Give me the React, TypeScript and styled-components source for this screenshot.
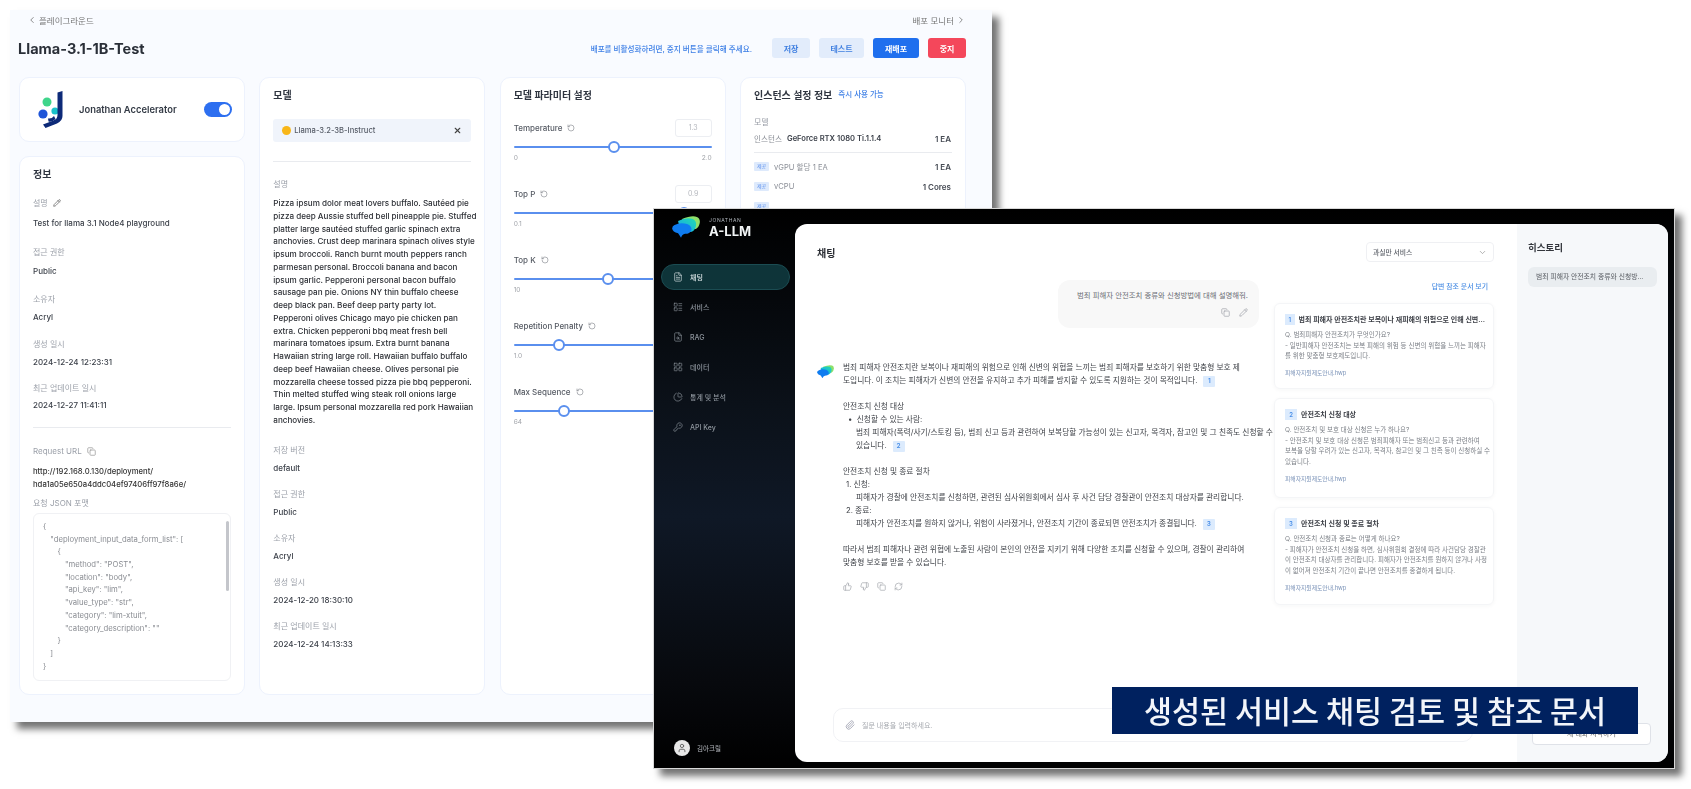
import React from "react";
import styled, { createGlobalStyle } from "styled-components";
import {
  ChevronLeft, ChevronRight, ChevronDown, Pencil, Copy, RotateCcw, X, FileText, LayoutList, FileSearch,
  LayoutGrid, PieChart, KeyRound, ThumbsUp, ThumbsDown, RefreshCw, Paperclip, User,
} from "lucide-react";

const Global = createGlobalStyle`
  html, body { margin: 0; padding: 0; background: #fff; }
  * { box-sizing: border-box; }
  body { font-family: Inter, "Noto Sans CJK KR", "Noto Sans", sans-serif; }
`;

const Stage = styled.div`
  position: relative;
  width: 1691px;
  height: 789px;
  overflow: hidden;
  background: #fff;
`;

/* ---------- back window: playground detail ---------- */
const PlaygroundWindow = styled.section`
  position: absolute;
  left: 10px;
  top: 10px;
  width: 982px;
  height: 712px;
  padding: 4px 26px 0 9px;
  background: #f9fbff;
  box-shadow: 7px 7px 7px rgba(0, 0, 0, 0.55);
  filter: blur(0.75px);
  display: flex;
  flex-direction: column;
`;
const CrumbRow = styled.div`
  display: flex;
  justify-content: space-between;
  align-items: center;
  height: 12px;
  font-size: 8.5px;
  color: #777;
  padding: 0 0 0 8px;
`;
const Crumb = styled.span`
  display: inline-flex;
  align-items: center;
  gap: 2px;
`;
const TitleRow = styled.div`
  display: flex;
  align-items: center;
  height: 20px;
  margin-top: 12px;
  margin-left: -1px;
`;
const PageTitle = styled.h1`
  margin: 0;
  font-size: 14.5px;
  font-weight: 700;
  color: #2a2f38;
  flex: 1;
`;
const Hint = styled.span`
  font-size: 7.6px;
  font-weight: 500;
  color: #3d7fe6;
  margin-right: 11px;
`;
const Button = styled.button<{ $kind: "soft" | "primary" | "danger"; $w: number }>`
  width: ${(p) => p.$w}px;
  height: 20px;
  margin-left: 9px;
  border: 0;
  border-radius: 3px;
  font: 600 8px Inter, "Noto Sans CJK KR", sans-serif;
  color: ${(p) => (p.$kind === "soft" ? "#3f7fe0" : "#fff")};
  background: ${(p) => (p.$kind === "soft" ? "#e2ecfb" : p.$kind === "primary" ? "#1f6fee" : "#f4475b")};
  padding: 0;
`;
const CardGrid = styled.div`
  display: grid;
  grid-template-columns: repeat(4, 226px);
  column-gap: 14.33px;
  height: 618px;
  margin-top: 19px;
`;
const Column = styled.div`
  display: flex;
  flex-direction: column;
  gap: 14px;
  min-height: 0;
`;
const Card = styled.div<{ $grow?: boolean }>`
  background: #fff;
  border: 1.5px solid #edf2fd;
  border-radius: 10px;
  padding: 9.5px 13px 13px;
  ${(p) => (p.$grow ? "flex: 1;" : "")}
  min-height: 0;
  overflow: hidden;
`;
const ToggleCard = styled(Card)`
  height: 65px;
  display: flex;
  align-items: center;
  padding: 0 12px 0 17px;
`;
const AccelName = styled.span`
  flex: 1;
  margin-left: 16px;
  font-size: 9.4px;
  font-weight: 600;
  color: #333a45;
`;
const Toggle = styled.span`
  position: relative;
  display: block;
  width: 28px;
  height: 15px;
  border-radius: 8px;
  background: #2d6ff0;
  &::after {
    content: "";
    position: absolute;
    right: 2px;
    top: 2px;
    width: 11px;
    height: 11px;
    border-radius: 50%;
    background: #fff;
  }
`;
const CardTitle = styled.h2<{ $after?: number }>`
  margin: 0 0 ${(p) => p.$after ?? 16}px;
  font-size: 10px;
  line-height: 14px;
  font-weight: 700;
  color: #2f3540;
  display: flex;
  align-items: center;
  gap: 6px;
`;
const TitleLink = styled.span`
  font-size: 7.5px;
  font-weight: 500;
  color: #3d7fe6;
`;
const Field = styled.div<{ $gap?: number; $after?: number }>`
  display: flex;
  flex-direction: column;
  gap: ${(p) => p.$gap ?? 6}px;
  margin-bottom: ${(p) => p.$after ?? 14}px;
`;
const Label = styled.div`
  display: flex;
  align-items: center;
  gap: 5px;
  font-size: 8px;
  line-height: 12px;
  color: #9a9fa8;
  height: 12px;
`;
const Value = styled.div`
  font-size: 8px;
  line-height: 12px;
  height: 12px;
  font-weight: 500;
  color: #3a3f48;
  white-space: nowrap;
`;
const Rule = styled.hr<{ $top: number; $bottom: number }>`
  border: 0;
  height: 1px;
  background: #e9ebef;
  margin: ${(p) => p.$top}px 0 ${(p) => p.$bottom}px;
`;
const UrlText = styled.div`
  font-size: 7.7px;
  line-height: 13px;
  font-weight: 500;
  color: #333;
  white-space: nowrap;
  margin: 8px 0 6px;
`;
const CodeBox = styled.div`
  position: relative;
  height: 168px;
  margin-top: 4px;
  border: 1px solid #f0f1f4;
  border-radius: 6px;
  padding: 7px 0 0 9px;
  &::after {
    content: "";
    position: absolute;
    right: 1px;
    top: 7px;
    width: 3px;
    height: 70px;
    border-radius: 2px;
    background: #c4c6cb;
  }
`;
const CodeLine = styled.div<{ $indent: number }>`
  font-size: 7.7px;
  line-height: 12.7px;
  height: 12.7px;
  color: #8a8d93;
  white-space: nowrap;
  padding-left: ${(p) => p.$indent * 7.3}px;
`;
const ModelChip = styled.div`
  display: flex;
  align-items: center;
  height: 23px;
  padding: 0 9px 0 9px;
  border-radius: 3px;
  background: #f0f4fb;
  font-size: 7.6px;
  font-weight: 500;
  color: #555b66;
`;
const ChipName = styled.span`
  flex: 1;
  margin-left: 3px;
`;
const ChipDot = styled.span`
  width: 9px;
  height: 9px;
  border-radius: 50%;
  background: #f8b618;
`;
const Paragraph = styled.div`
  margin: 7px 0 17px;
`;
const ParaLine = styled.div`
  font-size: 8.1px;
  line-height: 12.75px;
  height: 12.75px;
  font-weight: 500;
  color: #2c2f35;
  white-space: nowrap;
`;
const ParamBlock = styled.div`
  margin-bottom: 21px;
`;
const ParamHead = styled.div`
  display: flex;
  align-items: center;
  justify-content: space-between;
  height: 20px;
`;
const ParamName = styled.span`
  display: inline-flex;
  align-items: center;
  gap: 5px;
  font-size: 8px;
  font-weight: 500;
  color: #555a63;
`;
const ParamInput = styled.span`
  width: 37px;
  height: 18px;
  border: 1px solid #eceef2;
  border-radius: 3px;
  font-size: 7px;
  color: #b4b7bd;
  display: flex;
  align-items: center;
  justify-content: center;
`;
const SliderTrack = styled.div`
  position: relative;
  height: 12px;
  margin-top: 3px;
  &::before {
    content: "";
    position: absolute;
    left: 0;
    right: 0;
    top: 5px;
    height: 2.5px;
    background: #5a8fee;
    border-radius: 2px;
  }
`;
const SliderThumb = styled.span<{ $at: number }>`
  position: absolute;
  left: ${(p) => p.$at - 6}px;
  top: 0;
  width: 12px;
  height: 12px;
  border-radius: 50%;
  border: 2.5px solid #5a8fee;
  background: #fff;
`;
const SliderEnds = styled.div`
  display: flex;
  justify-content: space-between;
  height: 10px;
  font-size: 6.6px;
  line-height: 10px;
  color: #a0a3a9;
`;
const InstanceRow = styled.div<{ $h?: number }>`
  display: flex;
  align-items: center;
  gap: 5px;
  height: ${(p) => p.$h ?? 20}px;
  font-size: 7.6px;
  color: #8b8f97;
`;
const Strong = styled.span`
  font-weight: 600;
  color: #3a3f48;
`;
const Qty = styled.span`
  margin-left: auto;
  font-size: 8px;
  font-weight: 600;
  color: #444952;
  padding-right: 1px;
`;
const ResTag = styled.span`
  width: 15px;
  height: 9px;
  border-radius: 1px;
  background: #deeafc;
  color: #5a8fee;
  font-size: 5px;
  line-height: 9px;
  text-align: center;
`;

/* ---------- front window: chat ---------- */
const ChatWindow = styled.section`
  position: absolute;
  left: 653px;
  top: 208px;
  width: 1022px;
  height: 561px;
  background: linear-gradient(180deg, #000 0%, #0b1119 35%, #0f1826 55%, #07090d 85%, #000 100%);
  border: 1px solid #d8d8d8;
  box-shadow: 7px 7px 7px rgba(0, 0, 0, 0.55);
  filter: blur(0.75px);
  display: flex;
  padding: 15px 6px 6px 0;
`;
const Sidebar = styled.aside`
  width: 141px;
  flex: none;
  margin-top: -15px;
  margin-bottom: -6px;
  padding: 2px 5px 12px 7px;
  display: flex;
  flex-direction: column;
`;
const Brand = styled.div`
  display: flex;
  align-items: center;
  gap: 9px;
  height: 32px;
  padding-left: 11px;
  margin-bottom: 21px;
`;
const BrandText = styled.div`
  display: flex;
  flex-direction: column;
  color: #fff;
`;
const BrandSmall = styled.span`
  font-size: 5px;
  line-height: 7px;
  letter-spacing: 0.6px;
  color: #aeb4bb;
`;
const BrandBig = styled.span`
  font-size: 13px;
  line-height: 14px;
  font-weight: 700;
  color: #f1f4f5;
`;
const NavItem = styled.div<{ $active?: boolean }>`
  display: flex;
  align-items: center;
  gap: 7px;
  height: 26px;
  margin-bottom: 4px;
  padding-left: 11px;
  border-radius: 13px;
  font-size: 7px;
  font-weight: 500;
  color: ${(p) => (p.$active ? "#dfe8ea" : "#8f969e")};
  background: ${(p) => (p.$active ? "#0e3439" : "transparent")};
  border: 1px solid ${(p) => (p.$active ? "#1b4c52" : "transparent")};
`;
const SideUser = styled.div`
  margin-top: auto;
  display: flex;
  align-items: center;
  gap: 7px;
  padding-left: 13px;
  font-size: 6.5px;
  color: #b8bcc2;
`;
const Avatar = styled.span`
  width: 16px;
  height: 16px;
  border-radius: 50%;
  background: #e8e8e8;
  color: #555;
  display: flex;
  align-items: center;
  justify-content: center;
`;
const Main = styled.main`
  flex: 1;
  display: flex;
  min-width: 0;
  background: #fff;
  border-radius: 12px;
  overflow: hidden;
`;
const ChatPane = styled.div`
  flex: 1;
  min-width: 0;
  padding: 18px 23px 20px 22px;
  display: flex;
  flex-direction: column;
`;
const ChatHead = styled.div`
  display: flex;
  align-items: center;
  justify-content: space-between;
  height: 20px;
  font-size: 10px;
  font-weight: 700;
  color: #2a2d33;
`;
const ServiceSelect = styled.div`
  width: 128px;
  height: 20px;
  border: 1px solid #eff0f3;
  border-radius: 4px;
  display: flex;
  align-items: center;
  justify-content: space-between;
  padding: 0 6px;
  font-size: 6.8px;
  font-weight: 500;
  color: #5d6169;
`;
const ChatBody = styled.div`
  display: flex;
  gap: 12px;
  min-height: 0;
`;
const Conversation = styled.div`
  width: 445px;
  flex: none;
`;
const UserBubble = styled.div`
  width: 201px;
  height: 48px;
  margin: 18px 3px 33px auto;
  padding: 10px 11px 0 0;
  border-radius: 12px;
  background: #f8f8f8;
  display: flex;
  flex-direction: column;
  align-items: flex-end;
  font-size: 7.4px;
  line-height: 12px;
  color: #6a6d73;
  white-space: nowrap;
`;
const BubbleTools = styled.div`
  display: flex;
  gap: 9px;
  margin-top: 6px;
  color: #a4a7ad;
`;
const Answer = styled.div`
  display: flex;
`;
const AnswerIcon = styled.div`
  width: 26px;
  flex: none;
  padding-top: 1px;
`;
const AnswerText = styled.div`
  flex: 1;
  min-width: 0;
  color: #3f4248;
`;
const TextLine = styled.div<{ $in?: number; $gap?: number }>`
  font-size: 7.72px;
  line-height: 13px;
  height: 13px;
  white-space: nowrap;
  padding-left: ${(p) => p.$in ?? 0}px;
  margin-top: ${(p) => p.$gap ?? 0}px;
`;
const Ref = styled.span`
  display: inline-block;
  width: 12px;
  height: 11px;
  line-height: 11px;
  margin-left: 6px;
  text-align: center;
  font-size: 6.5px;
  font-weight: 600;
  color: #4a8fe8;
  background: #dcebfd;
  border-radius: 1px;
`;
const Feedback = styled.div`
  display: flex;
  gap: 8px;
  margin-top: 13px;
  color: #a9acb2;
`;
const Sources = styled.div`
  width: 220px;
  flex: none;
`;
const SourcesLink = styled.div`
  height: 14px;
  margin-top: 18px;
  line-height: 14px;
  text-align: right;
  padding-right: 6px;
  font-size: 6.9px;
  font-weight: 500;
  color: #4c8fe4;
`;
const SourceCard = styled.article<{ $h: number }>`
  height: ${(p) => p.$h}px;
  margin-top: 9px;
  padding: 9px 8px 0 10px;
  border: 1px solid #f4f5f7;
  border-radius: 6px;
  box-shadow: 0 1px 4px rgba(30, 40, 60, 0.04);
  background: #fff;
  overflow: hidden;
`;
const SourceHead = styled.div`
  display: flex;
  align-items: center;
  gap: 4px;
  height: 12px;
  font-size: 7px;
  font-weight: 600;
  color: #3a3d44;
  white-space: nowrap;
  margin-bottom: 5px;
`;
const SourceNum = styled.span`
  width: 12px;
  height: 11px;
  line-height: 11px;
  text-align: center;
  font-size: 6px;
  font-weight: 600;
  color: #4a8fe8;
  background: #dcebfd;
`;
const SourceLine = styled.div`
  font-size: 6.5px;
  line-height: 10.7px;
  height: 10.7px;
  color: #7c8087;
  white-space: nowrap;
`;
const SourceFile = styled.div`
  margin-top: 6px;
  font-size: 5.8px;
  line-height: 10px;
  color: #7b93b8;
  white-space: nowrap;
`;
const ChatInput = styled.div`
  margin-top: auto;
  margin-left: 16px;
  width: 640px;
  height: 34px;
  border: 1px solid #f1f2f5;
  border-radius: 10px;
  display: flex;
  align-items: center;
  gap: 7px;
  padding-left: 11px;
  font-size: 7px;
  color: #a6a9af;
`;
const HistoryPane = styled.aside`
  width: 151px;
  flex: none;
  background: #f6f8fa;
  padding: 17px 11px 17px 11px;
  display: flex;
  flex-direction: column;
`;
const HistoryTitle = styled.div`
  height: 14px;
  line-height: 14px;
  font-size: 9.5px;
  font-weight: 700;
  color: #33363c;
`;
const HistoryItem = styled.div`
  margin-top: 12px;
  width: 129px;
  height: 20px;
  border-radius: 6px;
  background: #e9edf0;
  padding-left: 8px;
  font-size: 6.8px;
  line-height: 20px;
  color: #55595f;
  white-space: nowrap;
`;
const HistoryButton = styled.div`
  margin-top: auto;
  margin-left: 4px;
  width: 119px;
  height: 22px;
  border: 1px solid #dfe2e8;
  border-radius: 4px;
  background: #fff;
  font-size: 7px;
  line-height: 20px;
  text-align: center;
  color: #666;
`;
const Caption = styled.div`
  position: absolute;
  left: 1112px;
  top: 687px;
  width: 526px;
  height: 47px;
  background: #00215f;
  color: #f2f5fa;
  font-family: "Noto Sans CJK KR", sans-serif;
  font-size: 30.5px;
  font-weight: 500;
  line-height: 46px;
  text-align: center;
  white-space: nowrap;
  filter: blur(0.5px);
`;

const JLogo = () => (
  <svg width="26" height="37" viewBox="0 0 26 37">
    <circle cx="10" cy="11" r="4.5" fill="#3fd58b" />
    <circle cx="18" cy="20" r="3.6" fill="#19c2c9" />
    <circle cx="6" cy="23" r="4.6" fill="#1f55d8" />
    <path d="M20.5 1.5 L25.5 0 L25.5 25 Q25.5 30 20 32.5 L8.5 37 L6 33.5 L16.5 29.5 Q20.5 28 20.5 24 Z" fill="#0d2a78" />
    <path d="M11 27.5 Q15 28 17 25 L18.5 28 Q15 31.5 11.5 30.5 Z" fill="#0d2a78" />
  </svg>
);

const BubbleLogo = ({ size, id }: { size: number; id: string }) => (
  <svg width={size} height={size * 0.78} viewBox="0 0 28 22">
    <defs>
      <linearGradient id={id} x1="0" y1="1" x2="1" y2="0">
        <stop offset="0" stopColor="#14a4ee" />
        <stop offset="1" stopColor="#22dcb0" />
      </linearGradient>
    </defs>
    <path d="M10 3 Q20 -1 25 1 Q28 2 28 6 Q27.5 11 24 13 L14 12 Z" fill="#8fe06a" />
    <path d="M6 5 Q14 1 21 3 Q25 5 24 10 Q23 15 19 16 L8 14 Z" fill={`url(#${id})`} />
    <path d="M2.5 9 Q8 6 15 8 Q20 10 19.5 14 Q18 18 13 18 Q10 18.5 9 22 Q7 19 6 17.5 Q0.5 16 0 12.5 Q0.2 10 2.5 9 Z" fill="#0f7cf0" />
  </svg>
);

const Row = ({ l, v, g, a }: { l: React.ReactNode; v: string; g?: number; a?: number }) => (
  <Field $gap={g} $after={a}>
    <Label>{l}</Label>
    <Value>{v}</Value>
  </Field>
);

const code: [number, string][] = [
  [0, "{"],
  [1, '"deployment_input_data_form_list": ['],
  [2, "{"],
  [3, '"method": "POST",'],
  [3, '"location": "body",'],
  [3, '"api_key": "lim",'],
  [3, '"value_type": "str",'],
  [3, '"category": "lim-xtuit",'],
  [3, '"category_description": ""'],
  [2, "}"],
  [1, "]"],
  [0, "}"],
];

const pizza = [
  "Pizza ipsum dolor meat lovers buffalo. Sautéed pie",
  "pizza deep Aussie stuffed bell pineapple pie. Stuffed",
  "platter large sautéed stuffed garlic spinach extra",
  "anchovies. Crust deep marinara spinach olives style",
  "ipsum broccoli. Ranch burnt mouth peppers ranch",
  "parmesan personal. Broccoli banana and bacon",
  "ipsum garlic. Pepperoni personal bacon buffalo",
  "sausage pan pie. Onions NY thin buffalo cheese",
  "deep black pan. Beef deep party party lot.",
  "Pepperoni olives Chicago mayo pie chicken pan",
  "extra. Chicken pepperoni bbq meat fresh bell",
  "marinara tomatoes ipsum. Extra burnt banana",
  "Hawaiian string large roll. Hawaiian buffalo buffalo",
  "deep beef Hawaiian cheese. Olives personal pie",
  "mozzarella cheese tossed pizza pie bbq pepperoni.",
  "Thin melted stuffed wing steak roll onions large",
  "large. Ipsum personal mozzarella red pork Hawaiian",
  "anchovies.",
];

const params = [
  { name: "Temperature", val: "1.3", at: 100, min: "0", max: "2.0" },
  { name: "Top P", val: "0.9", at: 170, min: "0.1" },
  { name: "Top K", at: 94, min: "10" },
  { name: "Repetition Penalty", at: 45, min: "1.0" },
  { name: "Max Sequence", at: 50, min: "64" },
];

const nav = [
  { icon: FileText, label: "채팅", active: true },
  { icon: LayoutList, label: "서비스" },
  { icon: FileSearch, label: "RAG" },
  { icon: LayoutGrid, label: "데이터" },
  { icon: PieChart, label: "통계 및 분석" },
  { icon: KeyRound, label: "API Key" },
];

const sources = [
  {
    h: 86,
    num: "1",
    title: "범죄 피해자 안전조치란 보복이나 재피해의 위험으로 인해 신변...",
    lines: [
      "Q. 범죄피해자 안전조치가 무엇인가요?",
      "- 일반피해자 안전조치는 보복 피해의 위험 등 신변의 위협을 느끼는 피해자",
      "를 위한 맞춤형 보호제도입니다.",
    ],
  },
  {
    h: 100,
    num: "2",
    title: "안전조치 신청 대상",
    lines: [
      "Q. 안전조치 및 보호 대상 신청은 누가 하나요?",
      "- 안전조치 및 보호 대상 신청은 범죄피해자 또는 범죄신고 등과 관련하여",
      "보복을 당할 우려가 있는 신고자, 목격자, 참고인 및 그 친족 등이 신청하실 수",
      "있습니다.",
    ],
  },
  {
    h: 98,
    num: "3",
    title: "안전조치 신청 및 종료 절차",
    lines: [
      "Q. 안전조치 신청과 종료는 어떻게 하나요?",
      "- 피해자가 안전조치 신청을 하면, 심사위원회 결정에 따라 사건담당 경찰관",
      "이 안전조치 대상자를 관리합니다. 피해자가 안전조치를 원하지 않거나 사정",
      "이 없어져 안전조치 기간이 끝나면 안전조치를 종결하게 됩니다.",
    ],
  },
];

export default function App() {
  return (
    <Stage>
      <Global />
      <PlaygroundWindow>
        <CrumbRow>
          <Crumb>
            <ChevronLeft size={10} /> 플레이그라운드
          </Crumb>
          <Crumb>
            배포 모니터 <ChevronRight size={10} />
          </Crumb>
        </CrumbRow>
        <TitleRow>
          <PageTitle>Llama-3.1-1B-Test</PageTitle>
          <Hint>배포를 비활성화하려면, 중지 버튼을 클릭해 주세요.</Hint>
          <Button $kind="soft" $w={38}>저장</Button>
          <Button $kind="soft" $w={45}>테스트</Button>
          <Button $kind="primary" $w={46}>재배포</Button>
          <Button $kind="danger" $w={38}>중지</Button>
        </TitleRow>
        <CardGrid>
          <Column>
            <ToggleCard>
              <JLogo />
              <AccelName>Jonathan Accelerator</AccelName>
              <Toggle />
            </ToggleCard>
            <Card $grow>
              <CardTitle>정보</CardTitle>
              <Row
                l={<>설명 <Pencil size={8} color="#555" /></>}
                v="Test for llama 3.1 Node4 playground"
                g={8}
                a={17}
              />
              <Row l="접근 권한" v="Public" g={7.5} a={16} />
              <Row l="소유자" v="Acryl" g={6} a={15} />
              <Row l="생성 일시" v="2024-12-24 12:23:31" g={6} a={14} />
              <Row l="최근 업데이트 일시" v="2024-12-27 11:41:11" g={5} a={0} />
              <Rule $top={16} $bottom={17} />
              <Label>
                Request URL <Copy size={9} color="#999" />
              </Label>
              <UrlText>
                http://192.168.0.130/deployment/
                <br />
                hda1a05e650a4ddc04ef97406ff97f8a6e/
              </UrlText>
              <Label>요청 JSON 포맷</Label>
              <CodeBox>
                {code.map(([i, t], idx) => (
                  <CodeLine key={idx} $indent={i}>{t}</CodeLine>
                ))}
              </CodeBox>
            </Card>
          </Column>
          <Card>
            <CardTitle $after={17.5}>모델</CardTitle>
            <ModelChip>
              <ChipDot />
              <ChipName>Llama-3.2-3B-Instruct</ChipName>
              <X size={9} color="#444" strokeWidth={3} />
            </ModelChip>
            <Rule $top={19} $bottom={16} />
            <Label>설명</Label>
            <Paragraph>
              {pizza.map((l) => (
                <ParaLine key={l}>{l}</ParaLine>
              ))}
            </Paragraph>
            <Row l="저장 버전" v="default" />
            <Row l="접근 권한" v="Public" />
            <Row l="소유자" v="Acryl" />
            <Row l="생성 일시" v="2024-12-20 18:30:10" />
            <Row l="최근 업데이트 일시" v="2024-12-24 14:13:33" />
          </Card>
          <Card>
            <CardTitle $after={16}>모델 파라미터 설정</CardTitle>
            {params.map((p) => (
              <ParamBlock key={p.name}>
                <ParamHead>
                  <ParamName>
                    {p.name} <RotateCcw size={8} color="#8a8d93" />
                  </ParamName>
                  {p.val && <ParamInput>{p.val}</ParamInput>}
                </ParamHead>
                <SliderTrack>
                  <SliderThumb $at={p.at} />
                </SliderTrack>
                <SliderEnds>
                  <span>{p.min}</span>
                  {p.max && <span>{p.max}</span>}
                </SliderEnds>
              </ParamBlock>
            ))}
          </Card>
          <Card>
            <CardTitle $after={14}>
              인스턴스 설정 정보 <TitleLink>즉시 사용 가능</TitleLink>
            </CardTitle>
            <Label>모델</Label>
            <InstanceRow $h={22}>
              인스턴스 <Strong>GeForce RTX 1080 Ti.1.1.4</Strong>
              <Qty>1 EA</Qty>
            </InstanceRow>
            <Rule $top={2} $bottom={4} />
            <InstanceRow>
              <ResTag>제공</ResTag> vGPU 할당 1 EA <Qty>1 EA</Qty>
            </InstanceRow>
            <InstanceRow>
              <ResTag>제공</ResTag> vCPU <Qty>1 Cores</Qty>
            </InstanceRow>
            <InstanceRow>
              <ResTag>제공</ResTag>
            </InstanceRow>
          </Card>
        </CardGrid>
      </PlaygroundWindow>

      <ChatWindow>
        <Sidebar>
          <Brand>
            <BubbleLogo size={28} id="brandGrad" />
            <BrandText>
              <BrandSmall>JONATHAN</BrandSmall>
              <BrandBig>A-LLM</BrandBig>
            </BrandText>
          </Brand>
          {nav.map((n) => (
            <NavItem key={n.label} $active={n.active}>
              <n.icon size={10} strokeWidth={1.5} />
              {n.label}
            </NavItem>
          ))}
          <SideUser>
            <Avatar><User size={10} /></Avatar>
            김아크릴
          </SideUser>
        </Sidebar>
        <Main>
          <ChatPane>
            <ChatHead>
              채팅
              <ServiceSelect>
                과실만 서비스 <ChevronDown size={9} color="#999" />
              </ServiceSelect>
            </ChatHead>
            <ChatBody>
              <Conversation>
                <UserBubble>
                  범죄 피해자 안전조치 종류와 신청방법에 대해 설명해줘.
                  <BubbleTools>
                    <Copy size={9} />
                    <Pencil size={9} />
                  </BubbleTools>
                </UserBubble>
                <Answer>
                  <AnswerIcon><BubbleLogo size={17} id="answerGrad" /></AnswerIcon>
                  <AnswerText>
                    <TextLine>범죄 피해자 안전조치란 보복이나 재피해의 위험으로 인해 신변의 위협을 느끼는 범죄 피해자를 보호하기 위한 맞춤형 보호 제</TextLine>
                    <TextLine>도입니다. 이 조치는 피해자가 신변의 안전을 유지하고 추가 피해를 방지할 수 있도록 지원하는 것이 목적입니다.<Ref>1</Ref></TextLine>
                    <TextLine $gap={13}>안전조치 신청 대상</TextLine>
                    <TextLine $in={5}>•&nbsp; 신청할 수 있는 사람:</TextLine>
                    <TextLine $in={13}>범죄 피해자(폭력/사기/스토킹 등), 범죄 신고 등과 관련하여 보복당할 가능성이 있는 신고자, 목격자, 참고인 및 그 친족도 신청할 수</TextLine>
                    <TextLine $in={13}>있습니다.<Ref>2</Ref></TextLine>
                    <TextLine $gap={13}>안전조치 신청 및 종료 절차</TextLine>
                    <TextLine $in={3}>1. 신청:</TextLine>
                    <TextLine $in={13}>피해자가 경찰에 안전조치를 신청하면, 관련된 심사위원회에서 심사 후 사건 담당 경찰관이 안전조치 대상자를 관리합니다.</TextLine>
                    <TextLine $in={3}>2. 종료:</TextLine>
                    <TextLine $in={13}>피해자가 안전조치를 원하지 않거나, 위험이 사라졌거나, 안전조치 기간이 종료되면 안전조치가 종결됩니다.<Ref>3</Ref></TextLine>
                    <TextLine $gap={13}>따라서 범죄 피해자나 관련 위협에 노출된 사람이 본인의 안전을 지키기 위해 다양한 조치를 신청할 수 있으며, 경찰이 관리하여</TextLine>
                    <TextLine>맞춤형 보호를 받을 수 있습니다.</TextLine>
                    <Feedback>
                      <ThumbsUp size={9} />
                      <ThumbsDown size={9} />
                      <Copy size={9} />
                      <RefreshCw size={9} />
                    </Feedback>
                  </AnswerText>
                </Answer>
              </Conversation>
              <Sources>
                <SourcesLink>답변 참조 문서 보기</SourcesLink>
                {sources.map((s) => (
                  <SourceCard key={s.num} $h={s.h}>
                    <SourceHead>
                      <SourceNum>{s.num}</SourceNum>
                      {s.title}
                    </SourceHead>
                    {s.lines.map((l) => (
                      <SourceLine key={l}>{l}</SourceLine>
                    ))}
                    <SourceFile>피해자지원제도안내.hwp</SourceFile>
                  </SourceCard>
                ))}
              </Sources>
            </ChatBody>
            <ChatInput>
              <Paperclip size={10} color="#9da0b0" />
              질문 내용을 입력하세요.
            </ChatInput>
          </ChatPane>
          <HistoryPane>
            <HistoryTitle>히스토리</HistoryTitle>
            <HistoryItem>범죄 피해자 안전조치 종류와 신청방...</HistoryItem>
            <HistoryButton>새 대화 시작하기</HistoryButton>
          </HistoryPane>
        </Main>
      </ChatWindow>
      <Caption>생성된 서비스 채팅 검토 및 참조 문서</Caption>
    </Stage>
  );
}
